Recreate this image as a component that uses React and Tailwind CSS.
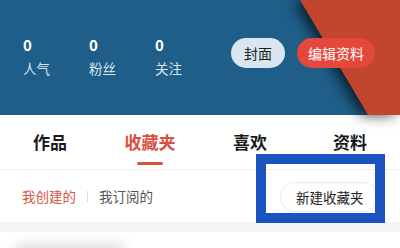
export default function App() {
  const stats = [
    { n: "0", label: "人气" },
    { n: "0", label: "粉丝" },
    { n: "0", label: "关注" },
  ];
  const tabs = ["作品", "收藏夹", "喜欢", "资料"];

  return (
    <div className="relative w-[400px] h-[248px] overflow-hidden bg-white font-['Noto_Sans_CJK_SC','Noto_Sans',sans-serif]">
      {/* header */}
      <div className="relative h-[115px] bg-[#1f5e89]">
        <div className="absolute inset-0 [filter:drop-shadow(-6px_0_7px_rgba(0,0,0,0.75))]">
          <div className="absolute inset-0 bg-[#c2452f] [clip-path:polygon(300px_0,400px_0,400px_115px,368px_115px)]" />
        </div>
        <div className="relative flex items-start pt-[35px] pl-[23px] pr-[25px]">
          <div className="flex">
            {stats.map((s) => (
              <div key={s.label} className="w-[66px] flex flex-col">
                <span className="text-[15px] leading-[20px] font-bold text-white">{s.n}</span>
                <span className="mt-[4px] text-[13.5px] leading-[18px] text-[#d6e4ef]">{s.label}</span>
              </div>
            ))}
          </div>
          <div className="ml-auto mt-[3px] flex gap-[12px]">
            <button className="h-[30px] w-[54px] rounded-full bg-[#d9e5ef] text-[14px] text-[#222]">
              封面
            </button>
            <button className="h-[30px] w-[78px] rounded-full bg-[#e3483a] text-[14px] text-white">
              编辑资料
            </button>
          </div>
        </div>
      </div>

      {/* tabs */}
      <div className="flex border-b border-[#eeeeee]">
        {tabs.map((t, i) => (
          <div key={t} className="flex-1 flex flex-col items-center pt-[15px] pb-[4px]">
            <span
              className={
                i === 1
                  ? "text-[17px] leading-[24px] font-bold text-[#d9503f]"
                  : "text-[17px] leading-[24px] font-bold text-[#1a1a1a]"
              }
            >
              {t}
            </span>
            <span
              className={
                i === 1
                  ? "mt-[8px] h-[3px] w-[26px] rounded-full bg-[#d9503f]"
                  : "mt-[8px] h-[3px] w-[26px]"
              }
            />
          </div>
        ))}
      </div>

      {/* sub tabs */}
      <div className="flex items-center h-[52px] pl-[22px] pr-[22px]">
        <span className="text-[13.5px] text-[#d65445]">我创建的</span>
        <span className="mx-[11px] h-[11px] w-px bg-[#dddddd]" />
        <span className="text-[13.5px] text-[#555]">我订阅的</span>
        <button className="ml-auto mt-[2px] h-[30px] w-[98px] rounded-full border border-[#ececec] bg-white text-[13.5px] text-[#222] text-left pl-[15px]">
          新建收藏夹
        </button>
      </div>

      <div className="h-[10px] bg-[#f5f5f5]" />

      <div className="pl-[15px] pt-[11px]">
        <div className="h-[18px] w-[110px] rounded-full bg-[#e0e0e0] blur-[6px]" />
      </div>

      {/* annotation box */}
      <div className="absolute left-[256px] top-[154px] w-[129px] h-[69px] border-[10px] border-[#1b54c1]" />
    </div>
  );
}
